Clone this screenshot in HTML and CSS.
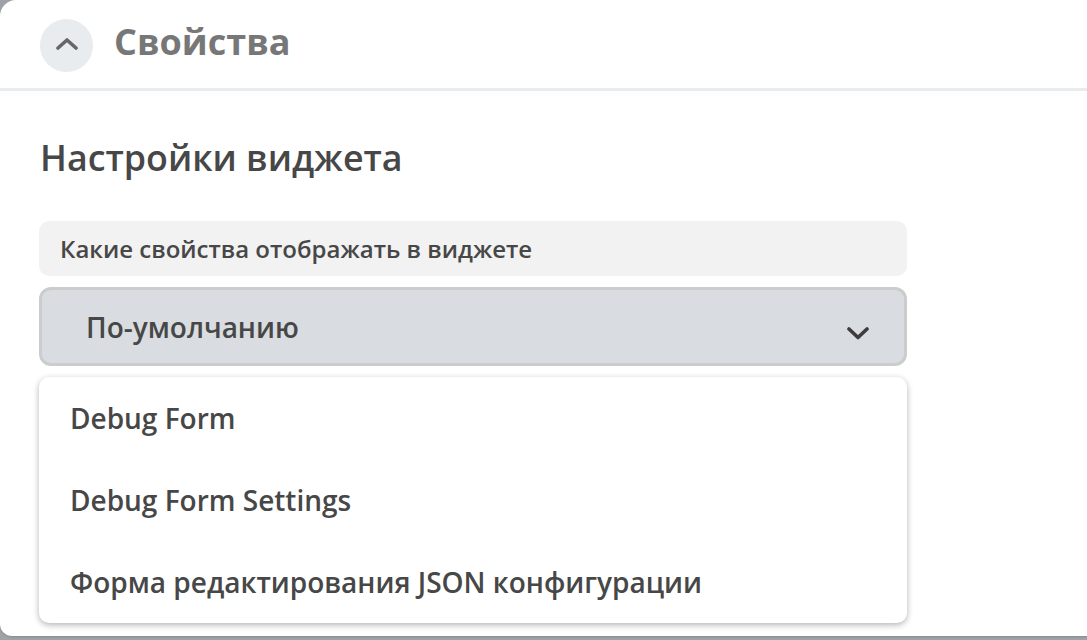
FILE: index.html
```html
<!DOCTYPE html>
<html lang="ru">
<head>
<meta charset="utf-8">
<title>Свойства</title>
<link rel="stylesheet" href="styles.css">
</head>
<body>
<div class="card">
  <div class="header">
    <button class="toggle" type="button" aria-label="Свернуть">
      <svg width="22" height="12" viewBox="0 0 22 12"><path d="M2 10 L11 2 L20 10" fill="none" stroke="#666" stroke-width="3.6" stroke-linecap="round" stroke-linejoin="round"/></svg>
    </button>
    <h1 class="title">Свойства</h1>
  </div>
  <div class="divider"></div>
  <div class="content">
    <h2 class="heading">Настройки виджета</h2>
    <div class="label">Какие свойства отображать в виджете</div>
    <div class="select">
      <span class="select-value">По-умолчанию</span>
      <svg class="select-arrow" width="22" height="13" viewBox="0 0 22 13"><path d="M2 2 L11 10.5 L20 2" fill="none" stroke="#3d3d3d" stroke-width="3.6" stroke-linecap="round" stroke-linejoin="round"/></svg>
    </div>
    <ul class="menu">
      <li class="menu-item">Debug Form</li>
      <li class="menu-item">Debug Form Settings</li>
      <li class="menu-item">Форма редактирования JSON конфигурации</li>
    </ul>
  </div>
</div>
</body>
</html>
```
FILE: styles.css
```css
html, body {
  margin: 0;
  padding: 0;
}
body {
  background: #9fa3a7;
  font-family: "Open Sans", "Noto Sans", sans-serif;
  width: 1087px;
  height: 640px;
  overflow: hidden;
}
.card {
  background: #ffffff;
  border-radius: 16px 0 0 12px;
  height: 636px;
  box-shadow: 0 1px 2px rgba(0,0,0,0.15);
}
.header {
  height: 88px;
  display: flex;
  align-items: center;
  padding-left: 40px;
  gap: 21px;
  box-sizing: border-box;
  padding-top: 2px;
}
.toggle {
  width: 53px;
  height: 53px;
  border-radius: 50%;
  border: none;
  background: #e8ecef;
  display: flex;
  align-items: center;
  justify-content: center;
  padding: 0;
  padding-bottom: 3px;
}
.title {
  margin: 0;
  font-size: 36px;
  font-weight: 700;
  color: #777777;
  line-height: 40px;
  margin-top: -6px;
}
.divider {
  height: 3px;
  background: #e8ecef;
}
.content {
  padding: 0 0 0 39px;
  width: 868px;
}
.heading {
  margin: 46px 0 0 1px;
  font-size: 35.8px;
  font-weight: 600;
  line-height: 40px;
  color: #474747;
}
.label {
  margin-top: 44px;
  height: 55px;
  background: #f2f2f2;
  border-radius: 10px;
  padding-left: 21px;
  display: flex;
  align-items: center;
  font-size: 24px;
  font-weight: 600;
  color: #474747;
}
.select {
  margin-top: 11px;
  height: 79px;
  box-sizing: border-box;
  border: 3px solid #cccccc;
  border-radius: 12px;
  background: #d9dde1;
  display: flex;
  align-items: center;
  justify-content: space-between;
  padding: 0 35px 0 44px;
}
.select-value {
  font-size: 28px;
  font-weight: 600;
  color: #474747;
}
.select-arrow {
  margin-top: 14px;
}
.menu {
  list-style: none;
  margin: 11px 0 0 0;
  padding: 0;
  height: 246px;
  box-sizing: border-box;
  background: #ffffff;
  border-radius: 10px;
  box-shadow: 0 2px 6px rgba(0,0,0,0.3);
}
.menu-item {
  height: 82px;
  display: flex;
  align-items: center;
  padding-left: 31px;
  font-size: 28px;
  font-weight: 600;
  color: #474747;
}
```
